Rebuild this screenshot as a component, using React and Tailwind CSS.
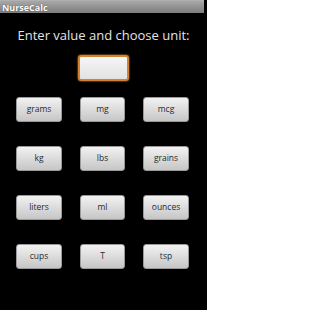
import React from "react";

const units = [
  "grams", "mg", "mcg",
  "kg", "lbs", "grains",
  "liters", "ml", "ounces",
  "cups", "T", "tsp",
];

export default function App() {
  return (
    <div className="w-[207px] h-[310px] bg-black overflow-hidden flex flex-col" style={{ fontFamily: '"Open Sans", "DejaVu Sans", sans-serif' }}>
      <div className="w-[204px] h-[13px] bg-gradient-to-b from-[#a8a8a8] to-[#7c7c7c] border-t border-t-[#b0b0b0] flex items-center pl-[2px]">
        <span className="text-[9px] font-bold text-white leading-none [text-shadow:0_0_1px_#333]">NurseCalc</span>
      </div>
      <div className="mt-[15px] text-center text-[13px] leading-[15px] text-[#e4e4e4]">
        Enter value and choose unit:
      </div>
      <div className="mt-[12px] flex justify-center">
        <div className="w-[51px] h-[26px] rounded-[3px] border-2 border-[#d4822e] bg-gradient-to-b from-[#f6f6f6] to-[#e2e2e2] shadow-[0_0_2px_#ffa040] ml-[-1px]" />
      </div>
      <div className="mt-[16px] pl-[16px] grid grid-cols-[46px_45px_46px] gap-x-[18px] gap-y-[24px]">
        {units.map((u) => (
          <div
            key={u}
            className="h-[25px] rounded-[3px] bg-gradient-to-b from-[#f2f2f2] to-[#c6c6c6] border border-[#9a9a9a] flex items-center justify-center text-[8.5px] text-[#2a2a2a] leading-none"
          >
            {u}
          </div>
        ))}
      </div>
    </div>
  );
}
